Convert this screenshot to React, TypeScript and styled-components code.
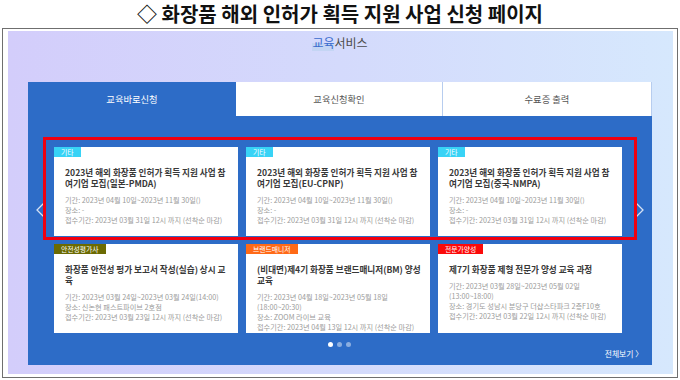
import React from 'react';
import styled, { createGlobalStyle } from 'styled-components';

const GlobalStyle = createGlobalStyle`
  html, body {
    margin: 0;
    padding: 0;
    background: #ffffff;
  }
  body {
    font-family: 'Noto Sans CJK KR', 'Noto Sans', sans-serif;
  }
  * {
    box-sizing: border-box;
  }
`;

const Page = styled.div`
  width: 680px;
  height: 380px;
  overflow: hidden;
`;

const Heading = styled.h1`
  margin: 0;
  height: 28px;
  padding-top: 1px;
  line-height: 26px;
  text-align: center;
  font-size: 20px;
  font-weight: 700;
  color: #111;
`;

const Frame = styled.div`
  margin: 0 2px;
  height: 350px;
  border: 1px solid #6f6f6f;
  padding: 2px 4px 3px 5px;
`;

const Backdrop = styled.div`
  height: 100%;
  background: linear-gradient(90deg, #d3cdfb 0%, #d4dafc 50%, #d6e8fd 100%);
  padding: 0 21px 9px 20px;
  display: flex;
  flex-direction: column;
`;

const SectionHead = styled.div`
  height: 51px;
  padding-top: 5px;
  line-height: 14px;
  text-align: center;
  font-size: 12px;
  color: #4a4a4a;
`;

const Accent = styled.span`
  color: #3a6bcd;
  background: linear-gradient(180deg, transparent 55%, #c4d5f4 55%);
`;

const Panel = styled.div`
  position: relative;
  flex: 1;
  background: #2d6cc7;
  display: flex;
  flex-direction: column;
`;

const Tabs = styled.div`
  display: grid;
  grid-template-columns: 208px 207px 1fr;
  height: 34px;
`;

const Tab = styled.div<{ $active?: boolean }>`
  display: flex;
  align-items: center;
  justify-content: center;
  font-size: 9.3px;
  color: ${(p) => (p.$active ? '#ffffff' : '#555555')};
  background: ${(p) => (p.$active ? '#2d6cc7' : '#ffffff')};
  border-right: ${(p) => (p.$active ? 'none' : '1px solid #b7cdef')};
`;

const Body = styled.div`
  padding: 31px 30px 0 26px;
`;

const Grid = styled.div`
  display: grid;
  grid-template-columns: repeat(3, 184px);
  grid-auto-rows: 89px;
  gap: 8px;
`;

const Card = styled.div`
  background: #ffffff;
  overflow: hidden;
`;

const Badge = styled.div<{ $color: string }>`
  width: fit-content;
  height: 10px;
  padding: 0 7px;
  line-height: 10px;
  font-size: 6.8px;
  color: #ffffff;
  background: ${(p) => p.$color};
`;

const CardBody = styled.div`
  padding: 10px 7px 0 11px;
`;

const CardTitle = styled.div`
  font-size: 8.6px;
  line-height: 11px;
  font-weight: 700;
  color: #383838;
  word-break: break-all;
`;

const Meta = styled.div`
  margin-top: 6px;
  padding-right: 4px;
  font-size: 7.2px;
  line-height: 10px;
  color: #9b9b9b;
  word-break: keep-all;
`;

const Arrow = styled.button<{ $side: 'left' | 'right' }>`
  position: absolute;
  top: 120px;
  ${(p) => (p.$side === 'left' ? 'left: 8px;' : 'right: 8px;')}
  width: 9px;
  height: 16px;
  padding: 0;
  border: none;
  background: none;
  display: flex;
`;

const Highlight = styled.div`
  position: absolute;
  left: 15px;
  top: 55px;
  width: 594px;
  height: 103px;
  border: 3px solid #f00010;
  pointer-events: none;
`;

const Dots = styled.div`
  display: flex;
  justify-content: center;
  gap: 4px;
  margin-top: 9px;
  padding-left: 2px;
`;

const Dot = styled.span<{ $on?: boolean }>`
  width: 5px;
  height: 5px;
  border-radius: 50%;
  background: ${(p) => (p.$on ? '#ffffff' : 'rgba(255,255,255,0.45)')};
`;

const More = styled.div`
  margin: 1px -21px 0 0;
  text-align: right;
  font-size: 7.8px;
  line-height: 12px;
  color: #ffffff;
`;

type Course = {
  tag: string;
  color: string;
  title: string;
  meta: string[];
};

const ETC = '#38d3f6';

const courses: Course[] = [
  {
    tag: '기타',
    color: ETC,
    title: '2023년 해외 화장품 인허가 획득 지원 사업 참여기업 모집(일본-PMDA)',
    meta: ['기간: 2023년 04월 10일~2023년 11월 30일()', '장소: -', '접수기간: 2023년 03월 31일 12시 까지 (선착순 마감)'],
  },
  {
    tag: '기타',
    color: ETC,
    title: '2023년 해외 화장품 인허가 획득 지원 사업 참여기업 모집(EU-CPNP)',
    meta: ['기간: 2023년 04월 10일~2023년 11월 30일()', '장소: -', '접수기간: 2023년 03월 31일 12시 까지 (선착순 마감)'],
  },
  {
    tag: '기타',
    color: ETC,
    title: '2023년 해외 화장품 인허가 획득 지원 사업 참여기업 모집(중국-NMPA)',
    meta: ['기간: 2023년 04월 10일~2023년 11월 30일()', '장소: -', '접수기간: 2023년 03월 31일 12시 까지 (선착순 마감)'],
  },
  {
    tag: '안전성평가사',
    color: '#6b6a02',
    title: '화장품 안전성 평가 보고서 작성(실습) 상시 교육',
    meta: ['기간: 2023년 03월 24일~2023년 03월 24일(14:00)', '장소: 신논현 패스트파이브 2호점', '접수기간: 2023년 03월 23일 12시 까지 (선착순 마감)'],
  },
  {
    tag: '브랜드매니저',
    color: '#ff6a17',
    title: '(비대면)제4기 화장품 브랜드매니저(BM) 양성 교육',
    meta: ['기간: 2023년 04월 18일~2023년 05월 18일 (18:00~20:30)', '장소: ZOOM 라이브 교육', '접수기간: 2023년 04월 13일 12시 까지 (선착순 마감)'],
  },
  {
    tag: '전문가양성',
    color: '#fb0a0a',
    title: '제7기 화장품 제형 전문가 양성 교육 과정',
    meta: ['기간: 2023년 03월 28일~2023년 05월 02일 (13:00~18:00)', '장소: 경기도 성남시 분당구 더샵스타파크 2층F10호', '접수기간: 2023년 03월 22일 12시 까지 (선착순 마감)'],
  },
];

const Chevron = ({ dir }: { dir: 'left' | 'right' }) => (
  <svg width="9" height="16" viewBox="0 0 9 16">
    <polyline
      points={dir === 'left' ? '8,1 1,8 8,15' : '1,1 8,8 1,15'}
      fill="none"
      stroke="rgba(255,255,255,0.8)"
      strokeWidth="1.3"
    />
  </svg>
);

const CourseCard = ({ course }: { course: Course }) => (
  <Card>
    <Badge $color={course.color}>{course.tag}</Badge>
    <CardBody>
      <CardTitle>{course.title}</CardTitle>
      <Meta>
        {course.meta.map((m) => (
          <div key={m}>{m}</div>
        ))}
      </Meta>
    </CardBody>
  </Card>
);

export default function App() {
  return (
    <Page>
      <GlobalStyle />
      <Heading>◇ 화장품 해외 인허가 획득 지원 사업 신청 페이지</Heading>
      <Frame>
        <Backdrop>
          <SectionHead>
            <Accent>교육</Accent>서비스
          </SectionHead>
          <Panel>
            <Tabs>
              <Tab $active>교육바로신청</Tab>
              <Tab>교육신청확인</Tab>
              <Tab>수료증 출력</Tab>
            </Tabs>
            <Body>
              <Grid>
                {courses.map((c) => (
                  <CourseCard key={c.title} course={c} />
                ))}
              </Grid>
              <Dots>
                <Dot $on />
                <Dot />
                <Dot />
              </Dots>
              <More>전체보기 〉</More>
            </Body>
            <Arrow $side="left" aria-label="이전">
              <Chevron dir="left" />
            </Arrow>
            <Arrow $side="right" aria-label="다음">
              <Chevron dir="right" />
            </Arrow>
            <Highlight />
          </Panel>
        </Backdrop>
      </Frame>
    </Page>
  );
}
